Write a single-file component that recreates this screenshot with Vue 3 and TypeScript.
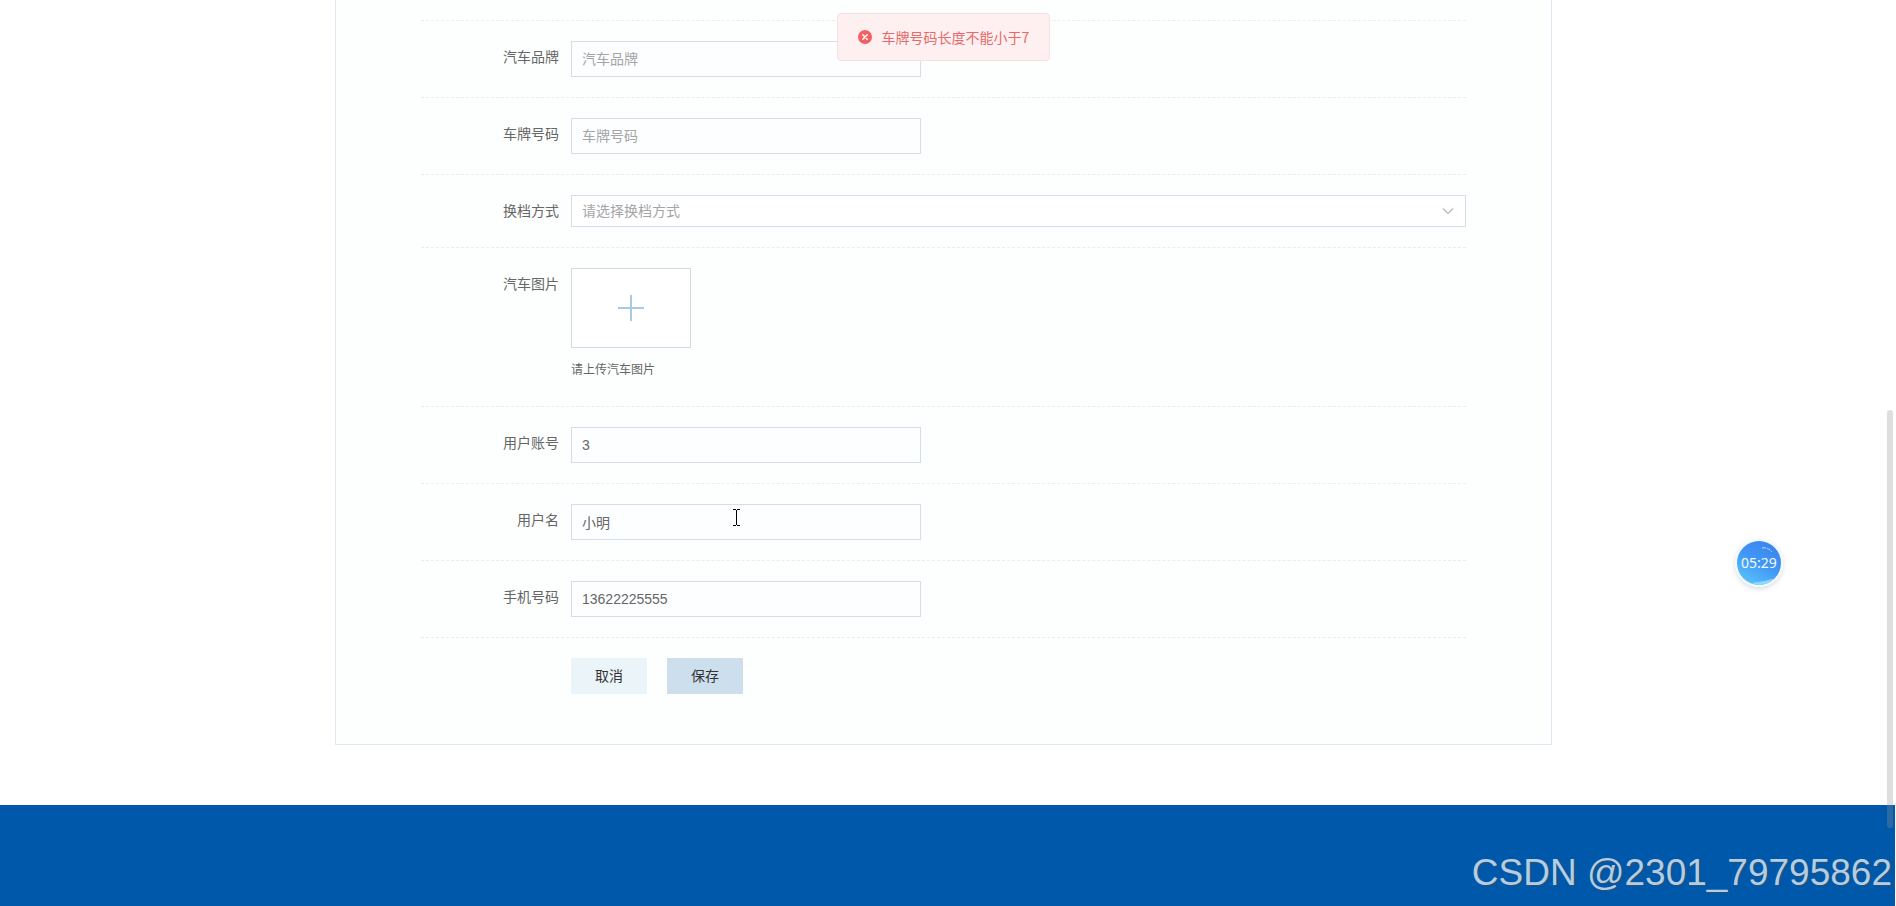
<script setup lang="ts">
import { reactive } from 'vue'

interface Field {
  key: 'brand' | 'plate' | 'account' | 'name' | 'phone'
  label: string
  placeholder: string
}

const form = reactive({
  brand: '',
  plate: '',
  gear: '',
  account: '3',
  name: '小明',
  phone: '13622225555',
})

const carFields: Field[] = [
  { key: 'brand', label: '汽车品牌', placeholder: '汽车品牌' },
  { key: 'plate', label: '车牌号码', placeholder: '车牌号码' },
]

const userFields: Field[] = [
  { key: 'account', label: '用户账号', placeholder: '用户账号' },
  { key: 'name', label: '用户名', placeholder: '用户名' },
  { key: 'phone', label: '手机号码', placeholder: '手机号码' },
]
</script>

<template>
  <div class="page">
    <main class="content">
      <form class="panel" @submit.prevent>
        <div class="row row-tail"></div>

        <div v-for="f in carFields" :key="f.key" class="row">
          <label class="label" :for="f.key">{{ f.label }}</label>
          <input :id="f.key" v-model="form[f.key]" class="text" type="text" :placeholder="f.placeholder" />
        </div>

        <div class="row">
          <label class="label" for="gear">换档方式</label>
          <div class="select-wrap">
            <select id="gear" v-model="form.gear" class="select">
              <option value="">请选择换档方式</option>
              <option value="auto">自动</option>
              <option value="manual">手动</option>
            </select>
            <svg class="chevron" viewBox="0 0 14 14" width="14" height="14" aria-hidden="true">
              <path d="M2 4.500 7 9.500 12 4.500" fill="none" stroke="#b4b8c0" stroke-width="1.2" />
            </svg>
          </div>
        </div>

        <div class="row">
          <span class="label">汽车图片</span>
          <div class="upload">
            <button class="upload-box" type="button" aria-label="汽车图片">
              <svg viewBox="0 0 26 26" width="26" height="26" aria-hidden="true">
                <path d="M13 0V26M0 13H26" fill="none" stroke="#a9cbe2" stroke-width="2" />
              </svg>
            </button>
            <p class="hint">请上传汽车图片</p>
          </div>
        </div>

        <div v-for="f in userFields" :key="f.key" class="row">
          <label class="label" :for="f.key">{{ f.label }}</label>
          <input :id="f.key" v-model="form[f.key]" class="text" type="text" :placeholder="f.placeholder" />
        </div>

        <div class="actions">
          <button class="btn cancel" type="button">取消</button>
          <button class="btn save" type="submit">保存</button>
        </div>
      </form>
    </main>

    <footer class="footer">
      <span class="mark">CSDN @2301_79795862</span>
    </footer>

    <div class="toast-layer">
      <div class="toast" role="alert">
        <svg viewBox="0 0 14 14" width="14" height="14" aria-hidden="true">
          <circle cx="7" cy="7" r="7" fill="#f35f62" />
          <path d="M4.800 4.800 9.200 9.200M9.200 4.800 4.800 9.200" stroke="#fff" stroke-width="1.500" stroke-linecap="round" />
        </svg>
        <span>车牌号码长度不能小于7</span>
      </div>
    </div>

    <div class="timer">
      <svg class="timer-art" viewBox="0 0 48 48" width="48" height="48" aria-hidden="true">
        <defs>
          <linearGradient id="ball" x1="0.8" y1="0" x2="0.25" y2="1">
            <stop offset="0" stop-color="#3b82ee" />
            <stop offset="0.5" stop-color="#4197f5" />
            <stop offset="1" stop-color="#5bc4fa" />
          </linearGradient>
        </defs>
        <circle cx="24" cy="24" r="24" fill="#f3fafe" />
        <circle cx="24" cy="24" r="22" fill="url(#ball)" />
        <path d="M17 44Q29 43 39 39.500Q32 46 24 46Q20 46 17 44Z" fill="#8edafb" />
        <path d="M27 9Q33 8 37 13" fill="none" stroke="#b9dcff" stroke-width="1" stroke-dasharray="4 1" />
      </svg>
      <span class="timer-text">05:29</span>
    </div>

    <svg class="ibeam" viewBox="0 0 9 17" width="9" height="17" aria-hidden="true">
      <path d="M1 .5H4M5 .5H8M4.500 1V16M1 16.500H4M5 16.500H8" fill="none" stroke="#000" stroke-width="1" />
    </svg>

    <div class="thumb"></div>
  </div>
</template>

<style>
body {
  background: #fff;
}
</style>

<style scoped>
.page {
  position: relative;
  min-height: 100vh;
  display: flex;
  flex-direction: column;
  overflow: hidden;
  color: #666;
  font: 14px/32px "Liberation Sans", "Noto Sans CJK SC", sans-serif;
}

.content {
  padding: 0 9px 60px 0;
}

.panel {
  box-sizing: border-box;
  width: 100%;
  max-width: 1217px;
  margin: 0 auto;
  padding: 0 85px 50px;
  border: 1px solid #e2e6ee;
  border-top: 0;
  background: #fdfffe;
}

.row {
  display: flex;
  align-items: flex-start;
  padding: 20px 0;
  border-bottom: 1px dashed #e9edf0;
}

.row-tail {
  padding: 20px 0 0;
}

.label {
  box-sizing: border-box;
  flex: 0 0 150px;
  padding-right: 12px;
  text-align: right;
}

.text,
.select {
  box-sizing: border-box;
  margin: 0;
  padding: 0 10px;
  border: 1px solid #d6dce8;
  border-radius: 0;
  outline: 0;
  color: #666;
  font: inherit;
}

.text {
  width: 350px;
  height: 36px;
  background: #fdfeff;
}

.text::placeholder {
  color: #a3a5a8;
  opacity: 1;
}

.select-wrap {
  position: relative;
  flex: 1;
  display: flex;
}

.select {
  width: 100%;
  height: 32px;
  appearance: none;
  background: #fff;
  color: #a3a5a8;
  line-height: 30px;
}

.chevron {
  position: absolute;
  top: 9px;
  right: 11px;
  pointer-events: none;
}

.upload-box {
  display: flex;
  align-items: center;
  justify-content: center;
  box-sizing: border-box;
  width: 120px;
  height: 80px;
  padding: 0;
  border: 1px solid #d2dae4;
  background: #fff;
}

.hint {
  margin: 6px 0 0;
  font-size: 12px;
}

.actions {
  display: flex;
  gap: 20px;
  padding: 20px 0 0 150px;
}

.btn {
  width: 76px;
  height: 36px;
  padding: 0;
  border: 0;
  color: #333;
  font: inherit;
}

.cancel {
  background: #ebf4f9;
}

.save {
  background: #cddeec;
}

.footer {
  flex: 1;
  display: flex;
  align-items: flex-end;
  justify-content: flex-end;
  box-sizing: border-box;
  min-height: 100px;
  margin-right: 1px;
  padding: 0 3px 12px 0;
  background: #0058aa;
}

.mark {
  color: #b3cde5;
  font-size: 37px;
  line-height: 42px;
  text-shadow: 1px 1px 1px #33506c;
}

.toast-layer {
  position: absolute;
  top: 13px;
  left: 0;
  right: 9px;
  display: flex;
  justify-content: center;
  pointer-events: none;
}

.toast {
  display: flex;
  align-items: center;
  gap: 10px;
  box-sizing: border-box;
  height: 48px;
  padding: 0 20px;
  border: 1px solid #fbe0e1;
  border-radius: 4px;
  background: #fef0f0;
  color: #e56a6c;
  font-family: "Noto Sans CJK SC", sans-serif;
  line-height: 20px;
  white-space: nowrap;
}

.timer {
  position: absolute;
  top: 539px;
  right: 113px;
  display: flex;
  align-items: center;
  justify-content: center;
  width: 48px;
  height: 48px;
  border-radius: 50%;
  box-shadow: 0 2px 5px #d9dde2;
}

.timer-art {
  position: absolute;
  inset: 0;
}

.timer-text {
  position: relative;
  color: #f2faff;
  font-family: "Noto Sans", sans-serif;
}

.ibeam {
  position: absolute;
  top: 509px;
  left: 732px;
}

.thumb {
  position: absolute;
  top: 410px;
  right: 3px;
  width: 6px;
  height: 418px;
  border-radius: 3px;
  background: rgba(144, 147, 153, 0.3);
}
</style>
